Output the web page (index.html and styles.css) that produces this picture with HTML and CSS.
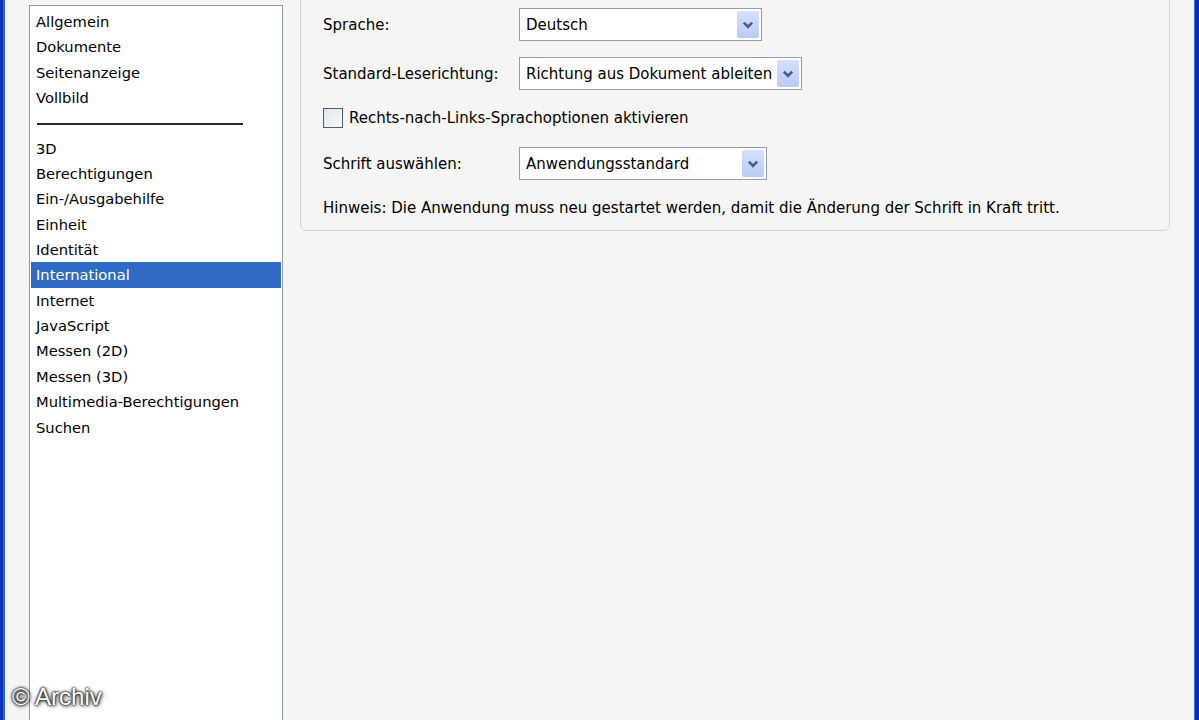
FILE: index.html
```html
<!DOCTYPE html>
<html lang="de">
<head>
<meta charset="utf-8">
<title>Voreinstellungen – International</title>
<link rel="stylesheet" href="styles.css">
</head>
<body>
<div class="frame-left"></div>
<main class="dialog">
  <ul class="category-list">
    <li>Allgemein</li>
    <li>Dokumente</li>
    <li>Seitenanzeige</li>
    <li>Vollbild</li>
    <li class="sep"><span></span></li>
    <li>3D</li>
    <li>Berechtigungen</li>
    <li>Ein-/Ausgabehilfe</li>
    <li>Einheit</li>
    <li>Identität</li>
    <li class="selected">International</li>
    <li>Internet</li>
    <li>JavaScript</li>
    <li>Messen (2D)</li>
    <li>Messen (3D)</li>
    <li>Multimedia-Berechtigungen</li>
    <li>Suchen</li>
  </ul>
  <section class="group">
    <div class="row">
      <span class="label">Sprache:</span>
      <div class="select w1"><span class="value">Deutsch</span><span class="btn"><svg viewBox="0 0 10 8" width="12" height="10"><path d="M1.5 2 L5 5.5 L8.5 2" fill="none" stroke="#4a5e88" stroke-width="2.2"/></svg></span></div>
    </div>
    <div class="row">
      <span class="label">Standard-Leserichtung:</span>
      <div class="select w2"><span class="value">Richtung aus Dokument ableiten</span><span class="btn"><svg viewBox="0 0 10 8" width="12" height="10"><path d="M1.5 2 L5 5.5 L8.5 2" fill="none" stroke="#4a5e88" stroke-width="2.2"/></svg></span></div>
    </div>
    <label class="check-row">
      <span class="checkbox"></span>
      <span>Rechts-nach-Links-Sprachoptionen aktivieren</span>
    </label>
    <div class="row">
      <span class="label">Schrift auswählen:</span>
      <div class="select w3"><span class="value">Anwendungsstandard</span><span class="btn"><svg viewBox="0 0 10 8" width="12" height="10"><path d="M1.5 2 L5 5.5 L8.5 2" fill="none" stroke="#4a5e88" stroke-width="2.2"/></svg></span></div>
    </div>
    <p class="hint">Hinweis: Die Anwendung muss neu gestartet werden, damit die Änderung der Schrift in Kraft tritt.</p>
  </section>
  <div class="spacer"></div>
</main>
<div class="frame-right"></div>
<div class="watermark">© Archiv</div>
</body>
</html>
```
FILE: styles.css
```css
html, body {
  margin: 0;
  padding: 0;
}
body {
  width: 1199px;
  height: 720px;
  overflow: hidden;
  display: flex;
  background: #f5f5f4;
  font-family: "DejaVu Sans", Verdana, sans-serif;
  font-size: 15px;
  color: #000;
  position: relative;
}
.frame-left {
  width: 5px;
  flex: none;
  background: linear-gradient(to right, #0a34c4 0, #0a34c4 3px, #2c62e6 3px, #2c62e6 5px);
}
.frame-right {
  width: 5px;
  flex: none;
  background: linear-gradient(to right, #3a6ee8 0, #3a6ee8 1px, #0a2fae 1px, #0a2fae 5px);
}
.dialog {
  flex: 1;
  display: flex;
  align-items: flex-start;
  padding-left: 24px;
  gap: 17px;
  height: 720px;
  overflow: hidden;
}
.category-list {
  list-style: none;
  margin: 5px 0 0 0;
  padding: 3px 1px 0 1px;
  width: 250px;
  height: 760px;
  flex: none;
  background: #fff;
  border: 1px solid #8c9aab;
  font-size: 14.7px;
}
.category-list li {
  height: 25.35px;
  line-height: 25.35px;
  padding-left: 5px;
  white-space: nowrap;
}
.category-list li.selected {
  background: #316ac5;
  color: #fff;
}
.category-list li.sep {
  display: flex;
  align-items: center;
}
.category-list li.sep span {
  display: block;
  width: 206px;
  height: 2px;
  background: #2a2a2a;
  margin-left: 1px;
  margin-top: 1px;
}
.group {
  width: 870px;
  flex: none;
  margin-top: -10px;
  padding: 17px 0 12px 22px;
  box-sizing: border-box;
  border: 1px solid #d5d5cf;
  border-radius: 6px;
  background: #f5f5f4;
  display: flex;
  flex-direction: column;
}
.row {
  display: flex;
  align-items: center;
  height: 33px;
}
.row + .row {
  margin-top: 16px;
}
.label {
  width: 196px;
  flex: none;
}
.select {
  box-sizing: border-box;
  height: 33px;
  border: 1px solid #8d9db3;
  background: #fff;
  display: flex;
  align-items: center;
  justify-content: space-between;
  padding: 2px 2px 2px 6px;
}
.select.w1 { width: 243px; }
.select.w2 { width: 283px; }
.select.w3 { width: 248px; }
.value {
  white-space: nowrap;
}
.btn {
  width: 22px;
  height: 27px;
  flex: none;
  background: linear-gradient(to bottom, #d4e0fc, #b9cbf6);
  border-radius: 2px;
  display: flex;
  align-items: center;
  justify-content: center;
}
.check-row {
  display: flex;
  align-items: center;
  gap: 6px;
  height: 20px;
  margin-top: 18px;
  margin-bottom: 19px;
}
.checkbox {
  width: 18px;
  height: 18px;
  flex: none;
  border: 1px solid #4d5d72;
  background: linear-gradient(135deg, #dfe3ea, #fafbfc);
}
.hint {
  margin: 18px 0 0 0;
  line-height: 20px;
  white-space: nowrap;
}
.spacer {
  flex: 1;
}
.watermark {
  position: absolute;
  left: 12px;
  top: 683px;
  font-family: "Liberation Sans", Arial, sans-serif;
  font-size: 24px;
  color: #fff;
  text-shadow: 0 0 2px #000, 0 0 3px #000, 1px 1px 4px #333;
}
```
